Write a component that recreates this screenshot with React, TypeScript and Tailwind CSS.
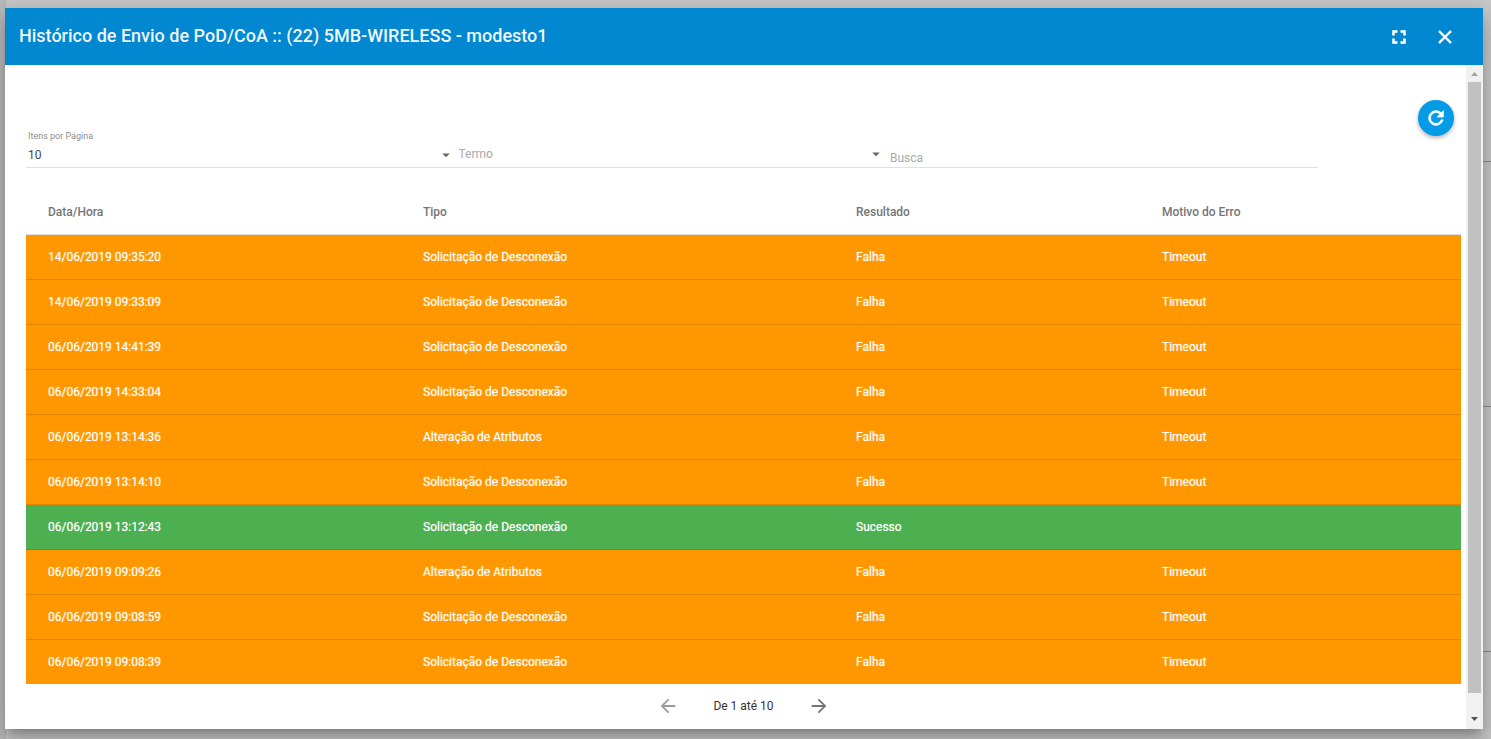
import { useState } from "react";
import { MdArrowBack, MdArrowDropDown, MdArrowForward } from "react-icons/md";

type Entry = { date: string; type: string; result: string; reason: string };

const disconnect = "Solicitação de Desconexão";
const change = "Alteração de Atributos";

const entries: Entry[] = [
  { date: "14/06/2019 09:35:20", type: disconnect, result: "Falha", reason: "Timeout" },
  { date: "14/06/2019 09:33:09", type: disconnect, result: "Falha", reason: "Timeout" },
  { date: "06/06/2019 14:41:39", type: disconnect, result: "Falha", reason: "Timeout" },
  { date: "06/06/2019 14:33:04", type: disconnect, result: "Falha", reason: "Timeout" },
  { date: "06/06/2019 13:14:36", type: change, result: "Falha", reason: "Timeout" },
  { date: "06/06/2019 13:14:10", type: disconnect, result: "Falha", reason: "Timeout" },
  { date: "06/06/2019 13:12:43", type: disconnect, result: "Sucesso", reason: "" },
  { date: "06/06/2019 09:09:26", type: change, result: "Falha", reason: "Timeout" },
  { date: "06/06/2019 09:08:59", type: disconnect, result: "Falha", reason: "Timeout" },
  { date: "06/06/2019 09:08:39", type: disconnect, result: "Falha", reason: "Timeout" },
];

const glyphs = {
  fullscreen: "M7 14H5v5h5v-2H7v-3zm-2-4h2V7h3V5H5v5zm12 7h-3v2h5v-5h-2v3zM14 5v2h3v3h2V5h-5z",
  close: "M19 6.410L17.590 5 12 10.590 6.410 5 5 6.410 10.590 12 5 17.590 6.410 19 12 13.410 17.590 19 19 17.590 13.410 12z",
  refresh:
    "M17.650 6.350C16.200 4.900 14.210 4 12 4c-4.420 0-7.990 3.580-7.990 8s3.570 8 7.990 8c3.730 0 6.840-2.550 7.730-6h-2.080c-.82 2.330-3.040 4-5.650 4-3.310 0-6-2.690-6-6s2.690-6 6-6c1.660 0 3.140.69 4.220 1.780L13 11h7V4l-2.350 2.350z",
};

function BoldIcon({ name }: { name: keyof typeof glyphs }) {
  return (
    <svg viewBox="0 0 24 24" aria-hidden="true" className="size-[22px] fill-current stroke-current" strokeWidth="0.8">
      <path d={glyphs[name]} />
    </svg>
  );
}

function Backdrop() {
  return (
    <div aria-hidden="true" className="absolute inset-0 flex overflow-hidden bg-[#c8c8c8]">
      <div className="w-[6px] border-r border-[#b4b4b4] bg-[#bababa]" />
      <div className="flex flex-1 flex-col">
        <div className="h-[162px] shrink-0 border-b border-[#8c8c8c]" />
        <div className="h-[245px] shrink-0 border-b border-[#8c8c8c]" />
        <div className="h-[245px] shrink-0 border-b border-[#8c8c8c]" />
      </div>
    </div>
  );
}

function DialogHeader() {
  return (
    <header className="flex h-[57px] items-center bg-[#0288d1] pr-6 pl-[14px] text-white">
      <h1 className="flex-1 pb-[2px] text-lg font-medium text-white/95">Histórico de Envio de PoD/CoA :: (22) 5MB-WIRELESS - modesto1</h1>
      <div className="flex gap-[18px]">
        <button type="button" aria-label="Tela cheia" className="flex size-7 items-center justify-center">
          <BoldIcon name="fullscreen" />
        </button>
        <button type="button" aria-label="Fechar" className="flex size-7 items-center justify-center">
          <BoldIcon name="close" />
        </button>
      </div>
    </header>
  );
}

function Filters() {
  const [size, setSize] = useState("10");
  const [term, setTerm] = useState("");
  const [search, setSearch] = useState("");
  return (
    <form className="grid grid-cols-10">
      <div className="col-span-9 grid grid-cols-3 items-end">
        <div className="flex flex-col border-b border-[#e0e0e0]">
          <label htmlFor="size" className="pl-[2px] text-[9px] leading-3 text-[#8c8c8c]">Itens por Página</label>
          <div className="grid items-center">
            <select id="size" value={size} onChange={(e) => setSize(e.target.value)} className="col-start-1 row-start-1 h-[25px] w-full appearance-none bg-transparent pl-[2px] text-xs text-[#444]">
              <option>10</option>
              <option>25</option>
              <option>50</option>
            </select>
            <MdArrowDropDown className="pointer-events-none col-start-1 row-start-1 mr-[2px] size-[18px] justify-self-end text-[#666]" />
          </div>
        </div>
        <div className="grid items-center border-b border-[#e0e0e0]">
          <select aria-label="Termo" value={term} onChange={(e) => setTerm(e.target.value)} className="col-start-1 row-start-1 h-[26px] w-full appearance-none bg-transparent pl-[2px] text-xs text-[#aaa]">
            <option value="">Termo</option>
            <option>Tipo</option>
            <option>Resultado</option>
          </select>
          <MdArrowDropDown className="pointer-events-none col-start-1 row-start-1 mr-[2px] size-[18px] justify-self-end text-[#666]" />
        </div>
        <input aria-label="Busca" placeholder="Busca" value={search} onChange={(e) => setSearch(e.target.value)} className="h-5 w-full border-b border-[#e0e0e0] pl-[3px] text-xs text-[#444] outline-none placeholder:text-[#aaa]" />
      </div>
      <div className="flex h-[68px] justify-end pr-[7px]">
        <button type="button" aria-label="Atualizar" className="flex size-9 items-center justify-center rounded-full bg-[#039be5] text-white shadow-[0_2px_4px_rgba(0,0,0,0.3)]">
          <BoldIcon name="refresh" />
        </button>
      </div>
    </form>
  );
}

function HistoryTable() {
  return (
    <table className="mt-[21px] w-full table-fixed border-separate border-spacing-0 text-left text-xs">
      <colgroup>
        <col className="w-[375px]" />
        <col className="w-[433px]" />
        <col className="w-[306px]" />
        <col />
      </colgroup>
      <thead>
        <tr className="h-[46px] text-[#757575]">
          {["Data/Hora", "Tipo", "Resultado", "Motivo do Erro"].map((title) => (
            <th key={title} scope="col" className="border-b border-[#e0e0e0] px-[22px] font-medium">{title}</th>
          ))}
        </tr>
      </thead>
      <tbody className="text-white *:*:border-b *:*:border-black/12 *:*:px-[22px] *:last:*:border-b-0">
        {entries.map((entry) => (
          <tr key={entry.date} className={`h-[45px] text-shadow-[0_0_1px_rgba(255,255,255,0.6)] last:h-11 ${entry.result === "Sucesso" ? "bg-[#4caf50]" : "bg-[#ff9800]"}`}>
            <td>{entry.date}</td>
            <td>{entry.type}</td>
            <td>{entry.result}</td>
            <td>{entry.reason}</td>
          </tr>
        ))}
      </tbody>
    </table>
  );
}

function Pager() {
  return (
    <nav aria-label="Paginação" className="flex h-11 items-center justify-center gap-[34px] text-xs text-[#333]">
      <button type="button" aria-label="Página anterior" disabled className="text-[#9a9a9a]">
        <MdArrowBack className="size-[22px]" />
      </button>
      <span>De 1 até 10</span>
      <button type="button" aria-label="Próxima página" className="text-[#757575]">
        <MdArrowForward className="size-[22px]" />
      </button>
    </nav>
  );
}

function ScrollTrack() {
  return (
    <div aria-hidden="true" className="flex w-[17px] flex-col items-center bg-[#f1f1f1]">
      <svg viewBox="0 0 17 17" className="size-[17px] fill-[#a3a3a3]"><path d="M5 11h7L8.500 7z" /></svg>
      <div className="w-[13px] flex-1 bg-[#c1c1c1]" />
      <div className="h-[18px]" />
      <svg viewBox="0 0 17 17" className="mb-px size-[17px] fill-[#505050]"><path d="M5 6h7L8.500 10z" /></svg>
    </div>
  );
}

export default function App() {
  return (
    <div className="relative flex min-h-screen pt-2 pr-2 pb-[10px] pl-[5px] font-[Roboto,sans-serif]">
      <Backdrop />
      <div role="dialog" aria-label="Histórico de Envio" className="relative flex flex-1 flex-col bg-white shadow-[0_7px_8px_-4px_rgba(0,0,0,0.2),0_13px_19px_2px_rgba(0,0,0,0.14),0_5px_24px_4px_rgba(0,0,0,0.12)]">
        <DialogHeader />
        <div className="flex flex-1">
          <main className="min-w-0 flex-1 pt-[35px] pr-[5px] pl-[21px]">
            <Filters />
            <HistoryTable />
            <Pager />
          </main>
          <ScrollTrack />
        </div>
      </div>
    </div>
  );
}
